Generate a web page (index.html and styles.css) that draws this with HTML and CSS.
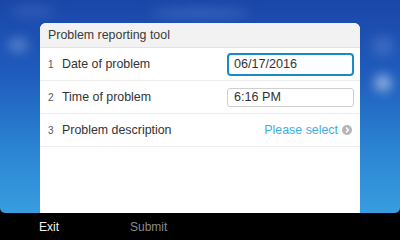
FILE: index.html
```html
<!DOCTYPE html>
<html lang="en">

<head>
    <meta charset="UTF-8">
    <meta name="viewport" content="width=device-width, initial-scale=1.0">
    <title>Problem reporting tool</title>
    <link rel="stylesheet" href="styles.css">
</head>

<body>
    <div class="screen">
        <!-- blurred home screen behind the dialog -->
        <div class="blur blur-title"></div>
        <div class="blur blur-left-bar"></div>
        <div class="blur blur-left-dot"></div>
        <div class="blur blur-right-top"></div>
        <div class="blur blur-right-dot"></div>

        <div class="dialog">
            <div class="dialog-header">Problem reporting tool</div>
            <div class="row">
                <span class="row-num">1</span>
                <span class="row-label">Date of problem</span>
                <div class="field field-active">06/17/2016</div>
            </div>
            <div class="row">
                <span class="row-num">2</span>
                <span class="row-label">Time of problem</span>
                <div class="field">6:16 PM</div>
            </div>
            <div class="row">
                <span class="row-num">3</span>
                <span class="row-label">Problem description</span>
                <div class="select">
                    Please select
                    <svg class="select-icon" width="10" height="10" viewBox="0 0 10 10">
                        <circle cx="5" cy="5" r="5" fill="#b5b5b5" />
                        <path d="M4 2.6 L6.4 5 L4 7.4" fill="none" stroke="#fff" stroke-width="1.4" />
                    </svg>
                </div>
            </div>
        </div>
    </div>
    <div class="softkeys">
        <span class="softkey">Exit</span>
        <span class="softkey softkey-disabled">Submit</span>
    </div>
</body>

</html>
```

FILE: styles.css
```css
body {
    margin: 0;
    width: 400px;
    height: 240px;
    overflow: hidden;
    background: #000;
    font-family: "Liberation Sans", Arial, sans-serif;
}

.screen {
    position: relative;
    height: 190px;
    padding-top: 23px;
    overflow: hidden;
    display: flex;
    justify-content: center;
    border-radius: 0 0 5px 5px;
    background: linear-gradient(180deg, #1a46a8 0%, #1f5cbd 35%, #2b84d2 70%, #389de0 100%);
}

.blur {
    position: absolute;
    border-radius: 50%;
    filter: blur(6px);
}

.blur-title {
    left: 150px;
    top: 8px;
    width: 100px;
    height: 10px;
    background: rgba(110, 150, 220, 0.35);
}

.blur-left-bar {
    left: 10px;
    top: 6px;
    width: 45px;
    height: 10px;
    background: rgba(110, 150, 220, 0.3);
}

.blur-left-dot {
    left: 8px;
    top: 38px;
    width: 20px;
    height: 14px;
    background: rgba(160, 190, 235, 0.45);
}

.blur-right-top {
    left: 372px;
    top: 36px;
    width: 22px;
    height: 20px;
    background: rgba(110, 140, 215, 0.4);
}

.blur-right-dot {
    left: 375px;
    top: 75px;
    width: 16px;
    height: 16px;
    background: rgba(215, 225, 245, 0.7);
}

.dialog {
    position: relative;
    width: 320px;
    background: #fff;
    border-radius: 6px 6px 0 0;
    overflow: hidden;
}

.dialog-header {
    height: 24px;
    line-height: 24px;
    padding-left: 8px;
    background: #f2f2f2;
    border-bottom: 1px solid #e2e2e2;
    font-size: 12.4px;
    color: #3a3a3a;
}

.row {
    display: flex;
    align-items: center;
    height: 32px;
    padding: 0 6px 0 8px;
    border-bottom: 1px solid #ececec;
}

.row-num {
    width: 14px;
    font-size: 10px;
    color: #555;
}

.row-label {
    flex-grow: 1;
    font-size: 12.4px;
    color: #333;
}

.field {
    box-sizing: border-box;
    width: 127px;
    height: 19px;
    padding-left: 6px;
    line-height: 17px;
    border: 1px solid #d0d0d0;
    border-radius: 3px;
    font-size: 12.6px;
    color: #333;
}

.field-active {
    height: 23px;
    padding-left: 5px;
    line-height: 19px;
    border: 2px solid #1a8ac8;
    border-radius: 4px;
}

.select {
    display: flex;
    align-items: center;
    gap: 4px;
    padding-right: 2px;
    font-size: 12.4px;
    color: #3aaee2;
}

.select-icon {
    display: block;
}

.softkeys {
    display: flex;
    height: 27px;
    align-items: center;
    padding-left: 39px;
    font-size: 12px;
}

.softkey {
    width: 91px;
    color: #f2f2f2;
    padding-top: 1px;
}

.softkey-disabled {
    color: #8a8a8a;
}
```
